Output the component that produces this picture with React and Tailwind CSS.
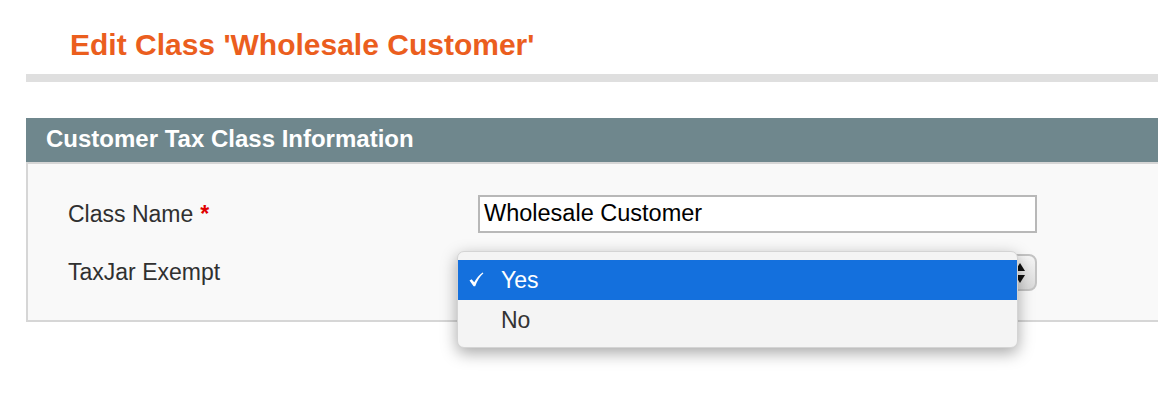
export default function App() {
  return (
    <div className="h-[414px] w-[1158px] overflow-hidden bg-white font-['Liberation_Sans',Arial,sans-serif]">
      <div className="pl-[70px] pt-[27px]">
        <h1 className="text-[30px] font-bold leading-[36px] text-[#eb5e1e]">
          Edit Class 'Wholesale Customer'
        </h1>
      </div>
      <div className="ml-[26px] mt-[11px] h-[8px] bg-[#dfdfdf]" />

      <div className="ml-[26px] mt-[36px]">
        <div className="flex h-[44px] items-center bg-[#6f878d] pb-[3px] pl-[20px]">
          <h2 className="text-[24px] font-bold text-white">Customer Tax Class Information</h2>
        </div>
        <div className="relative h-[160px] border-b-2 border-l-2 border-t-2 border-[#d6d6d6] bg-[#f9f9f9]">
          <div className="grid grid-cols-[410px_559px] gap-y-[21px] pl-[40px] pt-[31px]">
            <label className="flex h-[38px] items-center text-[23px] text-[#303030]">
              Class Name <span className="ml-[7px] font-bold text-[#e00000]">*</span>
            </label>
            <div className="flex h-[38px] items-center border-2 border-[#b8b8b8] bg-white px-[4px] text-[23.5px] text-black">
              Wholesale Customer
            </div>
            <label className="flex h-[37px] items-center text-[23px] text-[#303030]">TaxJar Exempt</label>
            <div className="flex h-[37px] items-center justify-end rounded-[8px] border-2 border-[#c4c4c4] bg-gradient-to-b from-[#f6f6f6] to-[#dadada] pr-[10px]">
              <svg width="10" height="22" viewBox="0 0 10 22">
                <path d="M5 1 L10 9 H0 Z" fill="#111" />
                <path d="M5 21 L10 13 H0 Z" fill="#111" />
              </svg>
            </div>
          </div>

          <div className="absolute left-[429px] top-[87px] w-[561px] rounded-[7px] border border-[#d4d4d4] bg-[#f4f4f4] py-[8px] shadow-[0_5px_16px_rgba(0,0,0,0.35)]">
            <div className="flex h-[40px] items-center bg-[#1470dd] text-white">
              <svg className="ml-[11px] mr-[17px] mt-[-2px]" width="15" height="15" viewBox="0 0 15 15">
                <path
                  d="M0.5 8.6 L2.6 7.2 L5.2 10.2 C7.5 6.2 10.2 2.8 13.6 0.4 L14.4 1.2 C11 4.4 8.2 8.6 6.2 14.2 L4.6 14.2 Z"
                  fill="#fff"
                />
              </svg>
              <span className="text-[23px]">Yes</span>
            </div>
            <div className="flex h-[39px] items-center pl-[43px] pt-[2px] text-[23px] text-[#333]">No</div>
          </div>
        </div>
      </div>
    </div>
  );
}
